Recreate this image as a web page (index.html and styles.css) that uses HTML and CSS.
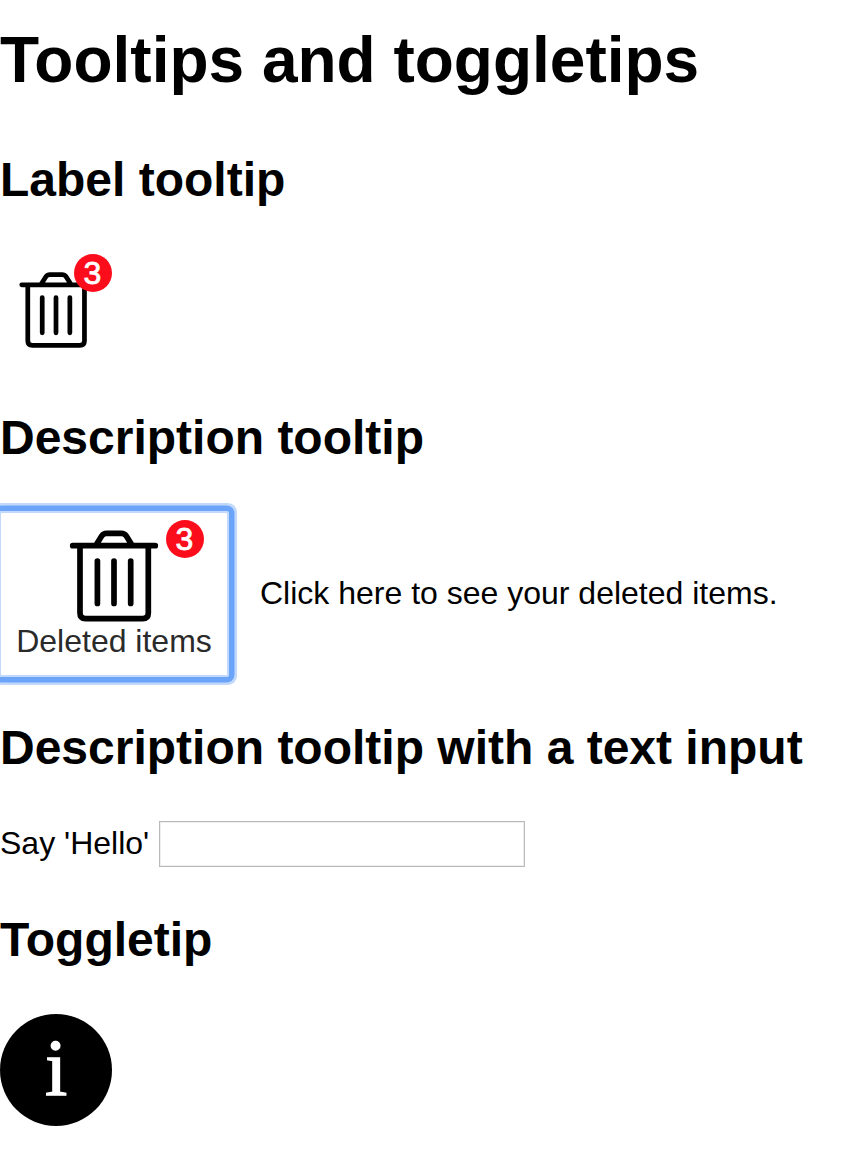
FILE: index.html
```html
<!DOCTYPE html>
<html lang="en">
<head>
<meta charset="utf-8">
<title>Tooltips and toggletips</title>
<link rel="stylesheet" href="styles.css">
</head>
<body>
<svg class="defs" width="0" height="0" aria-hidden="true">
  <symbol id="trash" viewBox="0 0 90 94">
    <g fill="none" stroke="#000" stroke-width="5.7" stroke-linecap="round" stroke-linejoin="round">
      <path d="M3.7 16.7H86.3M27.4 15.5L32.8 6.8Q34.6 4.3 37.6 4.3H52.4Q55.4 4.3 57.2 6.8L62.6 15.5"/>
      <path stroke-linecap="butt" d="M11 17V84Q11 89.6 16.6 89.6H73.7Q79.3 89.6 79.3 84V17"/>
      <path d="M28.4 32V74.5M45 32V74.5M61.7 32V74.5"/>
    </g>
  </symbol>
</svg>
<main>
  <h1>Tooltips and toggletips</h1>

  <h2>Label tooltip</h2>
  <button class="icon-button" aria-label="3 deleted items">
    <svg class="trash-small"><use href="#trash"/></svg>
    <span class="badge">3</span>
  </button>

  <h2>Description tooltip</h2>
  <div class="described">
    <button class="labelled-button focused">
      <svg class="trash-large"><use href="#trash"/></svg>
      <span>Deleted items</span>
      <span class="badge badge-offset">3</span>
    </button>
    <span class="description">Click here to see your deleted items.</span>
  </div>

  <h2>Description tooltip with a text input</h2>
  <div class="field">
    <label for="hello">Say 'Hello'</label>
    <input id="hello" type="text">
  </div>

  <h2>Toggletip</h2>
  <button class="info" aria-label="Information">i</button>
</main>
</body>
</html>
```
FILE: styles.css
```css
* { box-sizing: border-box; }

body {
  margin: 0;
  background: #fff;
  color: #000;
  font: 32px/36px "Liberation Sans", Arial, sans-serif;
  overflow: hidden;
}

.defs { display: block; }

main { padding-top: 23px; }

h1 {
  margin: 0 0 54px;
  font-size: 64px;
  line-height: 74px;
}

h2 {
  margin: 0;
  padding-top: 1px;
  font-size: 48px;
  line-height: 56px;
  white-space: nowrap;
}

button {
  display: block;
  padding: 0;
  border: 0;
  background: none;
  font: inherit;
}

.icon-button {
  position: relative;
  width: 112px;
  height: 98px;
  margin: 46px 0 57px;
  padding: 15px 0 1px 18px;
}

.trash-small {
  display: block;
  width: 76px;
  height: 78px;
}

.badge {
  position: absolute;
  top: 0;
  right: 0;
  width: 38px;
  height: 38px;
  padding-right: 1px;
  border-radius: 50%;
  background: #fc0d1b;
  color: #fff;
  line-height: 38px;
  text-align: center;
  -webkit-text-stroke: 0.8px #fff;
}

.badge-offset {
  top: 7px;
  right: 23px;
}

.described {
  display: flex;
  align-items: center;
  margin: 45px 0 42px;
}

.labelled-button {
  position: relative;
  display: flex;
  flex-direction: column;
  align-items: center;
  width: 230px;
  height: 166px;
  margin-left: -1px;
  padding-top: 16px;
  border: 2px solid #c2d9fc;
  color: #2a2a2a;
}

.focused {
  border-radius: 3px;
  box-shadow: 0 0 0 5.5px #6ba4f8, 0 0 0 8px #c2d9fc;
}

.trash-large {
  flex: none;
  width: 90px;
  height: 94px;
}

.description {
  margin-left: 31px;
  padding-bottom: 2px;
}

.field {
  display: flex;
  height: 46px;
  margin: 45px 0 44px;
}

.field label {
  width: 159px;
  padding-top: 4px;
}

.field input {
  width: 366px;
  height: 46px;
  padding: 4px;
  border: 1px solid #b9b9b9;
  border-radius: 0;
  box-shadow: inset 0 0 0 1px #eee;
  font: inherit;
}

.info {
  width: 112px;
  height: 112px;
  margin-top: 46px;
  padding-bottom: 4px;
  border-radius: 50%;
  background: #000;
  color: #fff;
  font: 80px/104px "Liberation Serif", "Times New Roman", serif;
  text-align: center;
  -webkit-text-stroke: 1.4px #fff;
}
```
